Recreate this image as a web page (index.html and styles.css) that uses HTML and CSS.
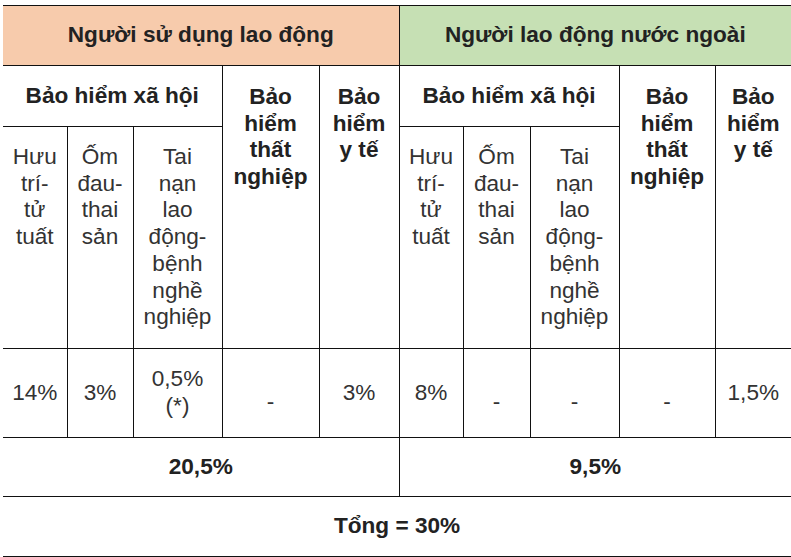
FILE: index.html
```html
<!DOCTYPE html>
<html lang="vi">
<head>
<meta charset="utf-8">
<link rel="stylesheet" href="styles.css">
</head>
<body>
<table class="rates">
  <colgroup>
    <col class="c1"><col class="c2"><col class="c3"><col class="c4"><col class="c5">
    <col class="c6"><col class="c7"><col class="c8"><col class="c9"><col class="c10">
  </colgroup>
  <tr class="r-head">
    <th colspan="5" class="emp">Người sử dụng lao động</th>
    <th colspan="5" class="foreign">Người lao động nước ngoài</th>
  </tr>
  <tr class="r-group">
    <th colspan="3" class="group">Bảo hiểm xã hội</th>
    <th rowspan="2" class="tall">Bảo<br>hiểm<br>thất<br>nghiệp</th>
    <th rowspan="2" class="tall">Bảo<br>hiểm<br>y tế</th>
    <th colspan="3" class="group">Bảo hiểm xã hội</th>
    <th rowspan="2" class="tall">Bảo<br>hiểm<br>thất<br>nghiệp</th>
    <th rowspan="2" class="tall">Bảo<br>hiểm<br>y tế</th>
  </tr>
  <tr class="r-sub">
    <td class="sub">Hưu<br>trí-<br>tử<br>tuất</td>
    <td class="sub">Ốm<br>đau-<br>thai<br>sản</td>
    <td class="sub">Tai<br>nạn<br>lao<br>động-<br>bệnh<br>nghề<br>nghiệp</td>
    <td class="sub">Hưu<br>trí-<br>tử<br>tuất</td>
    <td class="sub">Ốm<br>đau-<br>thai<br>sản</td>
    <td class="sub">Tai<br>nạn<br>lao<br>động-<br>bệnh<br>nghề<br>nghiệp</td>
  </tr>
  <tr class="r-data">
    <td>14%</td>
    <td>3%</td>
    <td>0,5%<br>(*)</td>
    <td class="dash">-</td>
    <td>3%</td>
    <td>8%</td>
    <td class="dash">-</td>
    <td class="dash">-</td>
    <td class="dash">-</td>
    <td>1,5%</td>
  </tr>
  <tr class="r-sum">
    <th colspan="5">20,5%</th>
    <th colspan="5">9,5%</th>
  </tr>
  <tr class="r-total">
    <th colspan="10" class="total">Tổng = 30%</th>
  </tr>
</table>
</body>
</html>
```

FILE: styles.css
```css
html, body {
  margin: 0;
  padding: 0;
  background: #ffffff;
  overflow: hidden;
}

body {
  font-family: "Liberation Sans", Arial, sans-serif;
  color: #333333;
}

.rates {
  margin: 5px 0 0 3px;
  width: 788px;
  table-layout: fixed;
  border-collapse: collapse;
  font-size: 22.6px;
  line-height: 26.7px;
}

.c1 { width: 64px; }
.c2 { width: 66px; }
.c3 { width: 89px; }
.c4 { width: 97px; }
.c5 { width: 80px; }
.c6 { width: 64px; }
.c7 { width: 67px; }
.c8 { width: 89px; }
.c9 { width: 96px; }
.c10 { width: 76px; }

.rates th,
.rates td {
  border: 1px solid #111111;
  padding: 0;
  text-align: center;
  vertical-align: middle;
}

.rates th {
  font-weight: bold;
  color: #222222;
}

.rates tr > :first-child { border-left: none; }
.rates tr > :last-child { border-right: none; }

.r-head { height: 60px; }

.emp { background: #f7cbac; }
.foreign { background: #c6e0b4; }

.r-group { height: 61px; }

.tall {
  vertical-align: top !important;
  padding-top: 18px !important;
}

.r-sub { height: 222px; }

.r-sub td {
  padding: 17px 0;
  vertical-align: top;
}

.r-data { height: 89px; }

.r-data td.dash {
  padding-top: 18px;
}

.r-sum { height: 59px; }

.r-total { height: 60px; }
```
